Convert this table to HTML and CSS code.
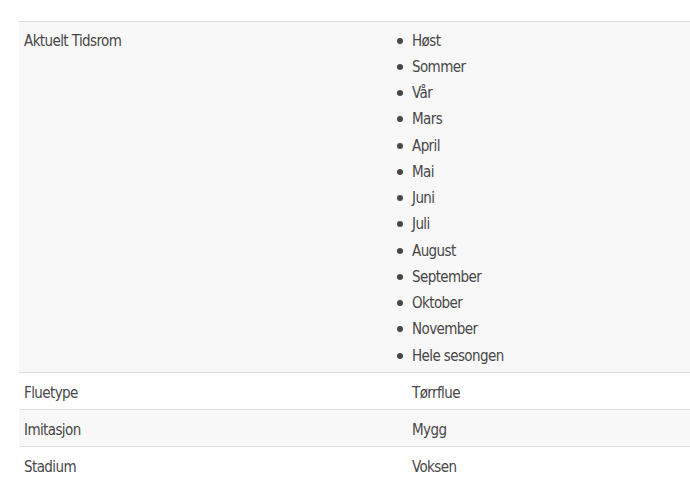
FILE: index.html
```html
<!DOCTYPE html>
<html lang="no">
<head>
<meta charset="utf-8">
<title>Egenskaper</title>
<link rel="stylesheet" href="styles.css">
</head>
<body>
<table class="attrs">
  <tbody>
    <tr class="odd">
      <th class="label">Aktuelt Tidsrom</th>
      <td class="value">
        <ul class="list">
          <li>Høst</li>
          <li>Sommer</li>
          <li>Vår</li>
          <li>Mars</li>
          <li>April</li>
          <li>Mai</li>
          <li>Juni</li>
          <li>Juli</li>
          <li>August</li>
          <li>September</li>
          <li>Oktober</li>
          <li>November</li>
          <li>Hele sesongen</li>
        </ul>
      </td>
    </tr>
    <tr class="even">
      <th class="label">Fluetype</th>
      <td class="value">Tørrflue</td>
    </tr>
    <tr class="odd">
      <th class="label">Imitasjon</th>
      <td class="value">Mygg</td>
    </tr>
    <tr class="even">
      <th class="label">Stadium</th>
      <td class="value">Voksen</td>
    </tr>
  </tbody>
</table>
</body>
</html>
```
FILE: styles.css
```css
html, body {
  margin: 0;
  padding: 0;
  background: #ffffff;
}
body {
  padding: 21px 0 0 19px;
  font-family: "DejaVu Sans Condensed", "DejaVu Sans", sans-serif;
  font-size: 15px;
  letter-spacing: -0.6px;
  color: #474747;
}
.attrs {
  border-collapse: collapse;
  width: 700px;
  border-top: 1px solid #dedede;
}
.attrs tr {
  border-bottom: 1px solid #dedede;
}
.attrs tr:last-child {
  border-bottom: none;
}
.attrs tr.odd {
  background: #f8f8f8;
}
.attrs tr.even {
  background: #ffffff;
}
.label, .value {
  text-align: left;
  vertical-align: top;
  font-weight: normal;
  padding: 6.5px 5px 2.5px;
  line-height: 27px;
}
.label {
  width: 378px;
}
.attrs tr:first-child .label {
  padding-top: 5.5px;
}
.attrs tr:first-child .value {
  padding-top: 5.5px;
  padding-bottom: 3.5px;
}
.list {
  margin: 0 0 0 -15px;
  padding: 0;
  list-style: none;
}
.list li {
  display: flex;
  align-items: center;
  gap: 9px;
  line-height: 26.25px;
}
.list li::before {
  content: "";
  flex: none;
  width: 6px;
  height: 6px;
  border-radius: 50%;
  background: #484848;
}
```
